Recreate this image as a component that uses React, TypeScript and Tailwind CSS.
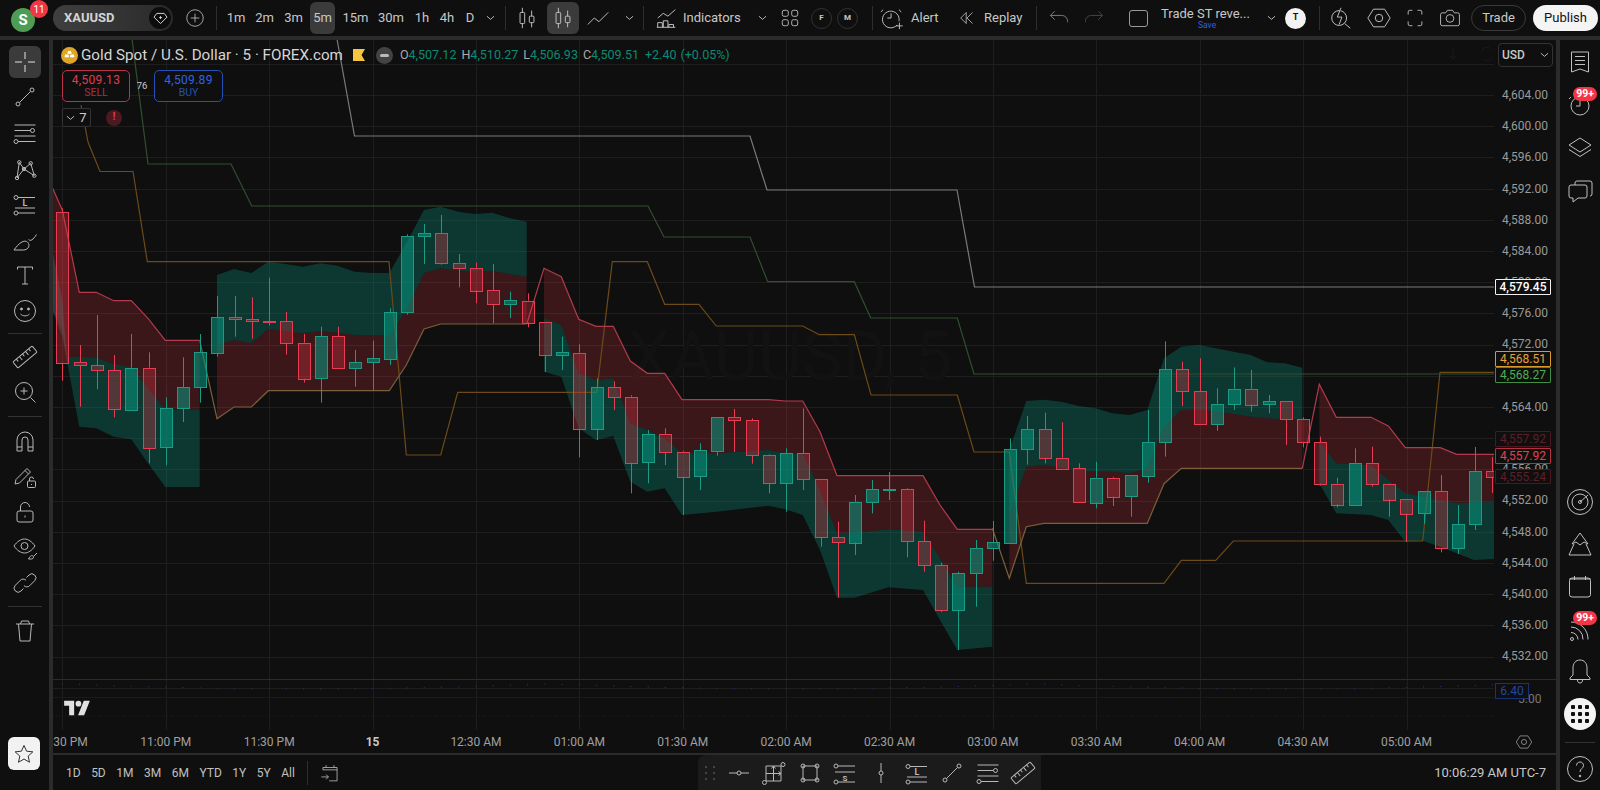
import React from 'react';

type Pt = [number, number];
type Candle = [number, number, number, number, number]; // up(1)/down(0), wick top, body top, body bottom, wick bottom

const Icon: React.FC<{ size?: number; className?: string; children: React.ReactNode }> = ({ size = 28, className, children }) => (
  <svg viewBox="0 0 28 28" width={size} height={size} fill="none" stroke="currentColor" strokeWidth={1} className={className}>
    {children}
  </svg>
);

const Dot = ({ x, y, r = 2 }: { x: number; y: number; r?: number }) => <circle cx={x} cy={y} r={r} />;

/* ---- drawing tool glyphs ---- */
const icons = {
  cross: <path d="M14 4v7M14 17v7M4 14h7M17 14h7" />,
  trend: <><path d="M8.5 19.5 19.5 8.5" /><Dot x={7} y={21} /><Dot x={21} y={7} /></>,
  fib: <><path d="M3.5 6h21M3.5 11.5h16M3.5 17h21M7 22.5h17.5" /><Dot x={21.5} y={11.5} /><Dot x={5} y={22.5} /></>,
  pattern: <><path d="M6 23 8.3 7.3 13 14l6.7-5.7 3.6 12.4L13 14 6 23" /><Dot x={6} y={23} r={1.7} /><Dot x={8.3} y={7.3} r={1.7} /><Dot x={13} y={14} r={1.7} /><Dot x={19.7} y={8.3} r={1.7} /><Dot x={23.3} y={20.7} r={1.7} /></>,
  long: <><path d="M7 7.5h17M4 18h20M7 23h17" /><Dot x={5} y={7.5} /><Dot x={5} y={23} /><text x="14" y="16" fontSize="9" fontWeight="700" textAnchor="middle" fill="currentColor" stroke="none" fontFamily="Roboto, sans-serif">L</text></>,
  short: <><path d="M7 7h17M4 13h20M7 23h17" /><Dot x={5} y={7} /><Dot x={5} y={23} /><text x="14" y="21.5" fontSize="8" fontWeight="700" textAnchor="middle" fill="currentColor" stroke="none" fontFamily="Roboto, sans-serif">S</text></>,
  brush: <><path d="M3 24h9.5c4 0 6.5-3.500 5-6.500-1-2.500-4-3-6.500-1.500-3 1.500-6 5-8 8z" /><path d="M17.500 13.500c2 2 4.500.5 8-5" /></>,
  text: <path d="M6.5 8.500V6h15v2.500M14 6v17M11 23h6" />,
  smile: <><circle cx="14" cy="14" r="10.5" /><circle cx="10.5" cy="12" r="1" fill="currentColor" /><circle cx="17.5" cy="12" r="1" fill="currentColor" /><path d="M9.5 17c2.500 2.500 6.500 2.500 9 0" /></>,
  ruler: <g transform="rotate(-40 14 14)"><rect x="1.5" y="10" width="25" height="8" rx="1" /><path d="M6 10v3M10 10v4.500M14 10v3M18 10v4.500M22 10v3" /></g>,
  zoom: <><circle cx="13" cy="13" r="8.5" /><path d="M13 9.500v7M9.500 13h7M19.500 19.500l5 5" /></>,
  magnet: <path d="M6 24V13a8 8 0 0 1 16 0v11h-5V13a3 3 0 0 0-6 0v11zM6 20h5M17 20h5" />,
  pencilLock: <><path d="M4 22l1-4.500L16 6.500l3.500 3.500L8.500 21zM14 8.500l3.500 3.500" /><rect x="16.5" y="19" width="8" height="6.5" rx="1" /><path d="M18.500 19v-2a2 2 0 0 1 4 0M20.500 22v1" /></>,
  lock: <><rect x="6" y="13" width="16" height="11" rx="2" /><path d="M9.500 13V9a4.500 4.500 0 0 1 9 0M14 17.500v2" /></>,
  eye: <><path d="M3 12c3-4.500 7-7 10.500-7S21 7.500 24 12c-3 4.500-7 7-10.500 7S6 16.500 3 12z" /><circle cx="13.5" cy="12" r="3.5" /><path d="M17.500 25h3c2 0 2.500-2 1.500-3s-2.500-.5-4.500 3zM23 22l3-3" /></>,
  link: <><path d="M12.500 19.500 10 22a4 4 0 1 1-5.700-5.700l5-5a4 4 0 0 1 5.700 0" /><path d="M15.500 8.500 18 6a4 4 0 1 1 5.700 5.700l-5 5a4 4 0 0 1-5.700 0" /></>,
  trash: <path d="M5 8h18M7.500 8l1.500 17h10l1.500-17M9.500 8l1-3h7l1 3" />,
  star: <path d="M14 4l3 6.700 7.300.8-5.400 4.900 1.500 7.200L14 19.900l-6.400 3.700 1.500-7.200L3.700 11.500l7.300-.8z" />,
  hline: <><path d="M4 14h8M16 14h8" /><Dot x={14} y={14} /></>,
  range: <><path d="M6 7h15v15H6zM6 14.500h15M13.500 7v15M13.500 7l-2 2.500M13.500 7l2 2.500M21 14.500l-2.500-2M21 14.500l-2.500 2" /><Dot x={23} y={5.5} /><Dot x={4.5} y={23.5} /></>,
  rect: <><path d="M7 7h14v14H7z" /><Dot x={7} y={7} /><Dot x={21} y={7} /><Dot x={7} y={21} /><Dot x={21} y={21} /></>,
  vline: <><path d="M14 4v8M14 16v8" /><Dot x={14} y={14} /></>,
};

const Interval = ({ label, w, active }: { label: string; w: string; active?: boolean }) => (
  <div className={`${w} h-8 flex items-center justify-center rounded-md text-[13px] ${active ? 'bg-[#3b3b3b]' : ''}`}>{label}</div>
);

const Chevron = ({ className }: { className?: string }) => (
  <svg viewBox="0 0 10 6" width="9" height="6" fill="none" stroke="currentColor" className={className}>
    <path d="M1 1l4 3.500L9 1" />
  </svg>
);

const Sep = ({ className }: { className?: string }) => <div className={`w-px h-6 bg-[#2e2e2e] ${className ?? ''}`} />;

const candleIcon = (
  <Icon size={26}><path d="M9 3v5M9 20v5M19 6v6M19 19v5" /><rect x="6.5" y="8" width="5" height="12" rx="1" /><rect x="16.5" y="12" width="5" height="7" rx="1" /></Icon>
);

const TopBar = () => (
  <div className="h-9 flex items-center bg-[#0f0f0f] text-[#c8c8c8] shrink-0">
    {/* avatar */}
    <div className="relative w-[53px] h-9 shrink-0 flex items-center pl-[11px]">
      <div className="w-6 h-6 mt-1 rounded-full bg-[#4f9d55] text-white text-[15px] font-bold flex items-center justify-center">S</div>
      <div className="absolute left-[30px] top-0 w-[18px] h-[18px] rounded-full bg-[#f23645] text-white text-[10px] flex items-center justify-center">11</div>
    </div>
    <div className="w-[120px] h-[26px] rounded-full bg-gradient-to-r from-[#3f3f3f] to-[#2a2a2a] flex items-center justify-between shrink-0 pl-[11px] pr-[2px]">
      <span className="text-[13px] font-bold text-[#d4d4d4]">XAUUSD</span>
      <span className="w-[22px] h-[22px] rounded-full bg-[#0d0d0d] flex items-center justify-center text-[#ddd]">
        <svg viewBox="0 0 16 14" width="15" height="13" fill="none" stroke="currentColor"><path d="M4 1.500h8l3 4-7 7-7-7zM6.500 6h3M8 4.500v3" /></svg>
      </span>
    </div>
    <div className="w-[43px] flex justify-center shrink-0">
      <Icon size={22}><circle cx="14" cy="14" r="10.5" /><path d="M14 8.500v11M8.500 14h11" /></Icon>
    </div>
    <Sep className="mr-[5px]" />
    <Interval label="1m" w="w-[28px]" />
    <Interval label="2m" w="w-[29px]" />
    <Interval label="3m" w="w-[29px]" />
    <div className="w-[2px]" />
    <Interval label="5m" w="w-[25px]" active />
    <Interval label="15m" w="w-[41px]" />
    <Interval label="30m" w="w-[30px]" />
    <Interval label="1h" w="w-[32px]" />
    <Interval label="4h" w="w-[18px]" />
    <Interval label="D" w="w-[28px]" />
    <div className="w-3 flex justify-center"><Chevron /></div>
    <div className="w-[9px]" />
    <Sep />
    <div className="w-[41px] flex justify-center">{candleIcon}</div>
    <div className="w-8 h-8 rounded-md bg-[#3b3b3b] flex items-center justify-center">{candleIcon}</div>
    <div className="w-[38px] flex justify-center">
      <Icon size={26}><path d="M3 21l7-7 5 4 10-10" /></Icon>
    </div>
    <div className="w-[6px]" />
    <div className="w-[13px] flex justify-center"><Chevron /></div>
    <div className="w-[7px]" />
    <Sep />
    <div className="w-[39px] flex justify-center pl-[7px]">
      <Icon size={26}><path d="M4 14l6-5 5 3 8-7M4 24v-5h5v5M10 24v-7h5v7M16 24v-3h5v3M3 24h20" /></Icon>
    </div>
    <span className="w-[72px] text-[13px]">Indicators</span>
    <div className="w-[14px] flex justify-center"><Chevron /></div>
    <div className="w-[42px] flex justify-center">
      <Icon size={24}><rect x="5" y="5" width="7" height="7" rx="2" /><rect x="16" y="5" width="7" height="7" rx="2" /><rect x="5" y="16" width="7" height="7" rx="2" /><rect x="16" y="16" width="7" height="7" rx="2" /></Icon>
    </div>
    <div className="w-[21px] h-[21px] rounded-full border border-[#333] flex items-center justify-center text-[8px] font-bold mr-[5px]">F</div>
    <div className="w-[21px] h-[21px] rounded-full border border-[#333] flex items-center justify-center text-[8px] font-bold">M</div>
    <div className="w-[14px]" />
    <Sep />
    <div className="w-[38px] flex justify-center">
      <Icon size={26}><path d="M19.500 21.500a9 9 0 1 1 2-4M13 9v5H9M4.500 5 2 7.500M21.500 5 24 7.500M22 19v7M18.500 22.500h7" /></Icon>
    </div>
    <span className="w-[39px] text-[13px]">Alert</span>
    <div className="w-[34px] flex justify-center">
      <Icon size={22}><path d="M13 7l-7 7 7 7zM21 7l-7 7 7 7" /></Icon>
    </div>
    <span className="w-[52px] text-[13px]">Replay</span>
    <Sep />
    <div className="w-[44px] flex justify-center text-[#8a8a8a]">
      <Icon size={24}><path d="M4 11h13c4 0 7 3 7 7v1M4 11l5-5M4 11l5 5" /></Icon>
    </div>
    <div className="w-[26px] flex justify-center text-[#4d4d4d]">
      <Icon size={24}><path d="M24 11H11c-4 0-7 3-7 7v1M24 11l-5-5M24 11l-5 5" /></Icon>
    </div>
    <div className="w-[22px]" />
    <div className="w-[19px] h-[17px] rounded-[3px] border border-[#999]" />
    <div className="w-[13px]" />
    <div className="w-[104px] flex flex-col items-start leading-none">
      <span className="text-[13px] whitespace-nowrap">Trade ST reve...</span>
      <span className="text-[8.5px] text-[#2f5fe0] ml-[37px] mt-[1px]">Save</span>
    </div>
    <div className="w-[13px] flex justify-center"><Chevron /></div>
    <div className="w-[7px]" />
    <div className="w-[21px] h-[21px] rounded-full bg-[#f2f2f2] text-[#111] text-[9px] font-bold flex items-center justify-center">T</div>
    <div className="w-[13px]" />
    <Sep />
    <div className="w-[41px] flex justify-center">
      <Icon size={26}><circle cx="12" cy="14" r="8" /><path d="M18 20l6 5M14 3l-4 10h5l-3 8" fill="#0f0f0f" /></Icon>
    </div>
    <div className="w-[36px] flex justify-center">
      <Icon size={26}><path d="M8 4.500h12l6 9.500-6 9.500H8L2 14z" /><circle cx="14" cy="14" r="4" /></Icon>
    </div>
    <div className="w-[35px] flex justify-center">
      <Icon size={24}><path d="M6 10V7a2 2 0 0 1 2-2h3M17 5h3a2 2 0 0 1 2 2v3M22 18v3a2 2 0 0 1-2 2h-3M11 23H8a2 2 0 0 1-2-2v-3" /></Icon>
    </div>
    <div className="w-[35px] flex justify-center">
      <Icon size={24}><path d="M3 10a2 2 0 0 1 2-2h4l2-3h6l2 3h4a2 2 0 0 1 2 2v11a2 2 0 0 1-2 2H5a2 2 0 0 1-2-2z" /><circle cx="14" cy="14.5" r="4.5" /></Icon>
    </div>
    <div className="w-[4px]" />
    <div className="w-[55px] h-[26px] rounded-full border border-[#3a3a3a] flex items-center justify-center text-[13px]">Trade</div>
    <div className="w-[7px]" />
    <div className="w-[65px] h-[26px] rounded-full bg-[#f4f4f4] text-[#111] flex items-center justify-center text-[13px]">Publish</div>
  </div>
);

const ToolBtn = ({ d, active }: { d: React.ReactNode; active?: boolean }) => (
  <div className="h-[35.6px] flex items-center justify-center">
    <div className={`w-8 h-8 rounded-md flex items-center justify-center ${active ? 'bg-[#3b3b3b] text-[#e4e4e4]' : ''}`}>
      <Icon>{d}</Icon>
    </div>
  </div>
);

const ToolSep = ({ h }: { h: string }) => (
  <div className={`${h} flex items-center justify-center`}><div className="w-[34px] h-px bg-[#333]" /></div>
);

const LeftBar = () => (
  <div className="w-[49px] bg-[#0f0f0f] flex flex-col shrink-0 text-[#b8b8b8] pt-1">
    <ToolBtn d={icons.cross} active />
    <ToolBtn d={icons.trend} />
    <ToolBtn d={icons.fib} />
    <ToolBtn d={icons.pattern} />
    <ToolBtn d={icons.long} />
    <ToolBtn d={icons.brush} />
    <ToolBtn d={icons.text} />
    <ToolBtn d={icons.smile} />
    <ToolSep h="h-[10px]" />
    <ToolBtn d={icons.ruler} />
    <ToolBtn d={icons.zoom} />
    <ToolSep h="h-[13px]" />
    <ToolBtn d={icons.magnet} />
    <ToolBtn d={icons.pencilLock} />
    <ToolBtn d={icons.lock} />
    <ToolBtn d={icons.eye} />
    <ToolBtn d={icons.link} />
    <ToolSep h="h-[11px]" />
    <ToolBtn d={icons.trash} />
    <div className="mt-auto mb-5 mx-2 h-[33px] w-8 rounded-md bg-[#f2f2f2] text-[#111] flex items-center justify-center">
      <Icon size={24}>{icons.star}</Icon>
    </div>
  </div>
);

const RightBtn = ({ h, children, badge }: { h: string; children: React.ReactNode; badge?: boolean }) => (
  <div className={`relative ${h} flex items-center justify-center`}>
    {children}
    {badge && <span className="absolute right-[3px] top-[4px] h-[14px] px-[3px] rounded-full bg-[#f23645] text-white text-[10.5px] font-bold leading-[14px]">99+</span>}
  </div>
);

const RightBar = () => (
  <div className="w-10 bg-[#0f0f0f] flex flex-col items-stretch shrink-0 text-[#c0c0c0]">
    <RightBtn h="h-[43px]"><Icon><path d="M5.500 4h17v20l-8.500-3-8.500 3zM9 8.500h10M9 12.500h10M9 16.500h10" /></Icon></RightBtn>
    <RightBtn h="h-[43px]" badge><Icon><circle cx="14" cy="15" r="9" /><path d="M14 9v6h-4M5 6 3 8M23 6l2 2" /></Icon></RightBtn>
    <RightBtn h="h-[43px]"><Icon><path d="M14 4 25 11 14 18 3 11zM3 15.500l11 7 11-7" /></Icon></RightBtn>
    <RightBtn h="h-[43px]"><Icon><path d="M9 8V6a2 2 0 0 1 2-2h13a2 2 0 0 1 2 2v11a2 2 0 0 1-2 2M3 10a2 2 0 0 1 2-2h14a2 2 0 0 1 2 2v9a2 2 0 0 1-2 2h-7l-5 4v-4H5a2 2 0 0 1-2-2z" /></Icon></RightBtn>
    <div className="mt-auto" />
    <RightBtn h="h-[42px]"><Icon><circle cx="14" cy="14" r="12.5" /><circle cx="14" cy="14" r="8" /><circle cx="14" cy="14" r="1.5" /><path d="M14 14l8-7" /></Icon></RightBtn>
    <RightBtn h="h-[42px]"><Icon><path d="M14 3l8 11-4-2-4 3-4-3-4 2zM8 14L3 25h22l-5-11" /></Icon></RightBtn>
    <RightBtn h="h-[42px]"><Icon><rect x="3.5" y="6" width="21" height="19" rx="2.5" /><path d="M8.500 4v4M19.500 4v4M3.500 7h21" /></Icon></RightBtn>
    <RightBtn h="h-[44px]" badge><Icon><circle cx="6" cy="24" r="1.5" /><path d="M5 17.500a7 7 0 0 1 7 7M5 12a12 12 0 0 1 12 12.500M5 7a17 17 0 0 1 17 17.500" /></Icon></RightBtn>
    <RightBtn h="h-[40px]"><Icon><path d="M14 3c-4.500 0-7 3.500-7 8v7l-3 3v1.500h20V21l-3-3v-7c0-4.500-2.500-8-7-8zM11.500 23c0 2 1 3 2.500 3s2.500-1 2.500-3" /></Icon></RightBtn>
    <RightBtn h="h-[46px]">
      <div className="w-8 h-8 rounded-full bg-[#f4f4f4] grid grid-cols-3 gap-[2px] p-[7px] place-items-center">
        {Array.from({ length: 9 }).map((_, i) => <span key={i} className="w-[4px] h-[4px] rounded-[1px] bg-[#111]" />)}
      </div>
    </RightBtn>
    <div className="h-[10px] flex items-center justify-center"><div className="w-[30px] h-px bg-[#333]" /></div>
    <RightBtn h="h-[43px]"><Icon><circle cx="14" cy="14" r="12.5" /><path d="M10.500 10.500c0-2 1.500-3.500 3.500-3.500s3.500 1.500 3.500 3.500c0 3-3.500 3-3.500 6.500" /><circle cx="14" cy="21" r=".8" fill="currentColor" /></Icon></RightBtn>
  </div>
);

/* ---- chart data, read off in crop coordinates (1/3 px) ---- */
const crop = (ox: number, oy: number) => (pts: number[][]): Pt[] => pts.map(([x, y]) => [ox + x / 3, oy + y / 3]);
const a = crop(50, 180);
const b = crop(520, 250);
const c = crop(980, 330);

const candlesA = [
  [0, 85, 97, 549, 602], [0, 495, 547, 556, 680], [0, 405, 556, 571, 628], [0, 525, 571, 688, 712], [1, 462, 563, 688, 688],
  [0, 517, 563, 803, 850], [1, 652, 685, 803, 856], [1, 532, 621, 685, 726], [1, 462, 517, 622, 668], [1, 348, 412, 519, 530],
  [0, 348, 412, 419, 470], [0, 352, 418, 425, 476], [0, 293, 423, 425, 436], [0, 396, 424, 489, 524], [0, 462, 488, 596, 608],
  [1, 440, 469, 596, 668], [0, 440, 469, 564, 564], [1, 510, 546, 564, 620], [1, 482, 535, 547, 632], [1, 385, 396, 536, 555],
  [1, 163, 169, 397, 404], [1, 132, 160, 170, 252], [0, 105, 160, 249, 254], [0, 222, 248, 264, 322], [0, 248, 263, 331, 370],
  [0, 252, 331, 373, 430], [1, 335, 361, 374, 414], [0, 340, 362, 427, 442],
].map(([k, ...v]) => [k, ...v.map((y) => 180 + y / 3)]);

const candlesB = [
  [0, 216, 216, 316, 366], [1, 260, 307, 317, 360], [0, 283, 308, 536, 622], [1, 385, 411, 536, 570], [0, 394, 411, 442, 480],
  [0, 435, 440, 638, 730], [1, 540, 553, 638, 700], [0, 535, 553, 607, 645], [0, 602, 605, 680, 795], [1, 580, 601, 680, 720],
  [1, 502, 502, 603, 617], [0, 477, 502, 512, 606], [0, 505, 511, 616, 641], [0, 613, 616, 699, 730], [1, 595, 610, 699, 785],
  [0, 475, 610, 688, 720], [0, 688, 688, 862, 890], [0, 815, 861, 877, 1043], [1, 735, 755, 877, 915], [1, 690, 718, 758, 790],
  [1, 666, 717, 719, 750], [0, 715, 718, 875, 922], [0, 812, 873, 946, 965], [0, 938, 946, 1082, 1086], [1, 965, 970, 1081, 1200],
  [1, 870, 895, 971, 1070], [1, 813, 877, 896, 932],
].map(([k, ...v]) => [k, ...v.map((y) => 250 + y / 3)]);

const candlesC = [
  [1, 326, 358, 639, 640], [1, 258, 298, 358, 404], [0, 248, 298, 384, 400], [0, 277, 383, 416, 416], [0, 400, 415, 517, 517],
  [1, 395, 443, 517, 535], [0, 440, 443, 500, 528], [1, 435, 436, 500, 560], [1, 240, 336, 437, 458], [1, 34, 118, 337, 380],
  [0, 95, 118, 185, 228], [0, 85, 183, 281, 281], [1, 175, 221, 281, 302], [1, 112, 176, 221, 240], [0, 120, 176, 223, 245],
  [1, 195, 214, 224, 250], [0, 213, 214, 268, 345], [0, 262, 268, 336, 352], [0, 320, 336, 461, 467], [0, 443, 461, 523, 532],
  [1, 355, 398, 524, 528], [0, 350, 398, 461, 470], [0, 460, 461, 508, 560], [0, 507, 507, 551, 636], [1, 484, 484, 551, 582],
  [0, 435, 484, 655, 667], [1, 525, 583, 656, 672], [1, 351, 423, 582, 600], [0, 381, 423, 440, 489],
].map(([k, ...v]) => [k, ...v.map((y) => 330 + y / 3)]);

const candles = [...candlesA, ...candlesB, ...candlesC] as Candle[];

const RED = 'rgba(242,54,69,0.2)';
const GREEN = 'rgba(8,153,129,0.3)';

const midA = a([[501, 495], [552, 480], [604, 490], [655, 447], [706, 453], [760, 460], [811, 453], [862, 458], [914, 465], [967, 465], [1018, 468], [1069, 390], [1122, 280], [1172, 265], [1225, 272], [1275, 275], [1327, 272], [1380, 283], [1430, 290]]);
const midB = b([[72, 205], [124, 225], [176, 370], [228, 390], [280, 385], [331, 520], [382, 540], [434, 565], [486, 610], [590, 610], [745, 600], [796, 610], [848, 610], [900, 720], [951, 850], [1003, 848], [1106, 838], [1209, 845], [1260, 925], [1312, 1010], [1417, 1010]]);
const midC = c([[88, 560], [139, 410], [191, 405], [244, 413], [295, 420], [346, 425], [397, 425], [449, 430], [502, 415], [552, 290], [604, 240], [657, 240], [707, 245], [760, 252], [812, 260], [862, 265], [914, 268], [967, 270]]);
const midD = c([[1018, 335], [1069, 400], [1173, 405], [1225, 450], [1276, 490], [1381, 510], [1430, 520], [1542, 515]]);

const redTopA = a([[8, 25], [37, 90], [88, 337], [139, 337], [191, 362], [244, 362], [294, 415], [346, 481], [449, 481]]);
const redTopB = b([[72, 55], [124, 80], [176, 208], [228, 229], [280, 229], [331, 333], [382, 370], [434, 370], [486, 449], [745, 449], [796, 453], [848, 453], [900, 545], [951, 677], [1209, 677], [1260, 765], [1312, 838], [1417, 838]]);
const redTopC = c([[1018, 163], [1069, 262], [1173, 262], [1225, 288], [1276, 353], [1381, 353], [1430, 373], [1542, 373]]);

const bands: { top: Pt[]; bottom: Pt[]; fill: string }[] = [
  {
    fill: RED,
    top: redTopA,
    bottom: a([[8, 390], [37, 450], [50, 530], [88, 530], [139, 533], [191, 553], [244, 562], [294, 625], [346, 690], [449, 690]]),
  },
  {
    fill: GREEN,
    top: a([[8, 215], [37, 360], [50, 530], [88, 530], [139, 533], [191, 553], [244, 562], [294, 625], [346, 690], [449, 690]]),
    bottom: a([[8, 395], [37, 470], [88, 740], [139, 745], [191, 770], [244, 778], [294, 850], [346, 921], [449, 921]]),
  },
  {
    fill: GREEN,
    top: a([[501, 285], [552, 267], [604, 279], [655, 245], [706, 252], [760, 260], [811, 250], [862, 257], [914, 275], [967, 279], [1018, 279], [1069, 190], [1122, 90], [1172, 80], [1225, 95], [1275, 102], [1327, 98], [1380, 115], [1430, 125]]),
    bottom: midA,
  },
  {
    fill: RED,
    top: midA,
    bottom: a([[501, 716], [552, 681], [604, 681], [655, 632], [1018, 632], [1069, 555], [1122, 447], [1172, 432], [1430, 432]]),
  },
  { fill: RED, top: redTopB, bottom: midB },
  {
    fill: GREEN,
    top: midB,
    bottom: b([[72, 365], [124, 380], [176, 535], [228, 570], [280, 558], [331, 695], [382, 725], [434, 715], [486, 795], [590, 785], [745, 767], [796, 778], [848, 795], [900, 900], [951, 1043], [1003, 1043], [1106, 1012], [1209, 1020], [1260, 1110], [1312, 1200], [1417, 1190]]),
  },
  {
    fill: GREEN,
    top: c([[88, 360], [139, 213], [191, 209], [244, 215], [295, 228], [346, 235], [397, 250], [449, 255], [502, 240], [552, 85], [604, 50], [657, 45], [707, 55], [760, 65], [812, 75], [862, 97], [914, 100], [967, 113]]),
    bottom: midC,
  },
  {
    fill: RED,
    top: midC,
    bottom: c([[88, 745], [139, 590], [191, 580], [502, 580], [552, 461], [604, 415], [967, 415]]),
  },
  { fill: RED, top: redTopC, bottom: midD },
  {
    fill: GREEN,
    top: midD,
    bottom: c([[1018, 460], [1069, 550], [1173, 555], [1225, 570], [1276, 635], [1328, 632], [1381, 650], [1430, 670], [1482, 690], [1542, 687]]),
  },
];

const toPts = (pts: Pt[]) => pts.map(([x, y]) => `${x.toFixed(1)},${y.toFixed(1)}`).join(' ');

const tanLine: Pt[] = a([[449, 481], [501, 716], [552, 681], [604, 681], [655, 632], [1018, 632], [1069, 555], [1122, 447], [1172, 432], [1430, 432]]);
const tanLine2: Pt[] = c([[37, 595], [88, 745], [139, 590], [191, 580], [502, 580], [552, 461], [604, 415], [967, 415]]);
const redLine2: Pt[] = [...a([[1430, 432]]), ...redTopB];
const redLine3: Pt[] = [...c([[967, 415]]), ...redTopC];

const orange: Pt[] = [[81, 105], [88, 142], [100, 171.5], [133, 171.5], [147.3, 261.7], [389, 261.7], [406.3, 455], [440.7, 455], [457.7, 392.3], [596.7, 392.3], [612.3, 261.7], [647.3, 261.7], [664.7, 304.3], [699, 304.3], [716.3, 326], [802.7, 326], [819.3, 334.7], [854.3, 334.7], [871, 395], [957.3, 395], [974, 452], [1009.3, 452], [1026.3, 583.3], [1164, 583.3], [1181.3, 560.3], [1215.7, 560.3], [1233.3, 541], [1422.7, 541], [1440, 372.3], [1494, 372.3]];
const darkGreen: Pt[] = [[132, 39], [148, 164], [231, 164], [251.7, 206], [648, 206], [664, 237], [750, 237], [767.7, 281.7], [854.3, 281.7], [870.7, 318], [957.3, 318], [974, 374], [1494, 374]];
const gray: Pt[] = [[337, 39], [354.5, 136], [750, 136], [767, 190], [957, 190], [974.5, 287], [1494, 287]];

const ChartSvg = () => {
  const hLines = Array.from({ length: 21 }, (_, i) => 95 + 31.2 * (i - 1));
  const vLines = Array.from({ length: 14 }, (_, i) => Math.round(62.4 + 103.4 * i) + 0.5);
  return (
    <svg viewBox="53 40 1441 690" width="1441" height="690" className="block">
      {hLines.map((y) => <line key={y} x1="53" x2="1494" y1={Math.round(y) + 0.5} y2={Math.round(y) + 0.5} stroke="#1e1e1e" />)}
      {vLines.map((x) => <line key={x} x1={x} x2={x} y1="40" y2="730" stroke="#1e1e1e" />)}
      <line x1="53" x2="1494" y1="697.5" y2="697.5" stroke="#1a1a1a" />
      <line x1="53" x2="1494" y1="716" y2="716" stroke="#1c2238" strokeDasharray="1 2" />
      <text x="790" y="380" fontSize="68" textAnchor="middle" fill="#121212" fontFamily="Roboto, sans-serif">XAUUSD, 5</text>

      {bands.map((s, i) => <polygon key={i} points={toPts([...s.top, ...[...s.bottom].reverse()])} fill={s.fill} />)}

      <polyline points={toPts(orange)} fill="none" stroke="#6d4a18" strokeWidth="1.2" />
      <polyline points={toPts(darkGreen)} fill="none" stroke="#31502f" strokeWidth="1.2" />
      <polyline points={toPts(gray)} fill="none" stroke="#7a7a7a" strokeWidth="1.2" />
      <polyline points={toPts(tanLine)} fill="none" stroke="#7a5f3a" strokeWidth="1.2" />
      <polyline points={toPts(tanLine2)} fill="none" stroke="#7a5f3a" strokeWidth="1.2" />
      <polyline points={toPts(redTopA)} fill="none" stroke="#b23a4c" strokeWidth="1.2" />
      <polyline points={toPts(redLine2)} fill="none" stroke="#b23a4c" strokeWidth="1.2" />
      <polyline points={toPts(redLine3)} fill="none" stroke="#b23a4c" strokeWidth="1.2" />

      {candles.map(([up, wt, bt, bb, wb], i) => {
        const x = Math.round(62.4 + 17.23 * i) + 0.5;
        const stroke = up ? '#1a9c84' : '#e83c52';
        const fill = up ? 'rgba(8,153,129,0.55)' : 'rgba(242,54,69,0.3)';
        return (
          <g key={i} stroke={stroke}>
            <line x1={x} x2={x} y1={wt} y2={bt} />
            <line x1={x} x2={x} y1={bb} y2={wb} />
            <rect x={x - 6} y={Math.round(bt) + 0.5} width="12" height={Math.max(Math.round(bb - bt), 1)} fill={fill} />
          </g>
        );
      })}

      {Array.from({ length: 84 }, (_, i) => {
        const y = 684 + 5 * Math.abs(Math.sin(i / 9));
        return <circle key={i} cx={62.4 + 17.23 * i} cy={y} r="0.7" fill="#1f2f66" />;
      })}
    </svg>
  );
};

const PriceTag = ({ top, text, cls, bold }: { top: string; text: string; cls: string; bold?: boolean }) => (
  <div className={`absolute left-[1px] w-[56px] flex items-center justify-center border rounded-[1px] bg-[#0f0f0f] text-[12px] leading-none ${top} ${cls} ${bold ? 'font-medium' : ''}`}>{text}</div>
);

const priceLabels = ['4,604.00', '4,600.00', '4,596.00', '4,592.00', '4,588.00', '4,584.00', '4,580.00', '4,576.00', '4,572.00', '4,568.00', '4,564.00', '4,560.00', '4,556.00', '4,552.00', '4,548.00', '4,544.00', '4,540.00', '4,536.00', '4,532.00'];
const timeLabels = ['10:30 PM', '11:00 PM', '11:30 PM', '15', '12:30 AM', '01:00 AM', '01:30 AM', '02:00 AM', '02:30 AM', '03:00 AM', '03:30 AM', '04:00 AM', '04:30 AM', '05:00 AM'];
const ranges = ['1D', '5D', '1M', '3M', '6M', 'YTD', '1Y', '5Y', 'All'];

const PriceAxis = () => (
  <div className="relative w-[62px] h-[690px] overflow-hidden text-[#9a9a9a]">
    <div className="flex flex-col pt-[39.4px]">
      {priceLabels.map((p) => (
        <div key={p} className="h-[31.2px] flex items-center justify-start pl-[8px] text-[12px]">{p}</div>
      ))}
    </div>
    <div className="absolute left-0 top-[650px] w-[62px] pl-[24px] text-[12px] text-[#777]">5.00</div>
    <PriceTag top="top-[239px] h-[16px]" text="4,579.45" cls="border-[#f0f0f0] text-white" bold />
    <PriceTag top="top-[311px] h-[16px]" text="4,568.51" cls="border-[#d99a2b] text-[#e8a33a]" />
    <PriceTag top="top-[327px] h-[16px]" text="4,568.27" cls="border-[#3f8f45] text-[#4caf50]" />
    <PriceTag top="top-[391px] h-[16px]" text="4,557.92" cls="border-[#4a1820] text-[#5e1f2a]" />
    <PriceTag top="top-[408px] h-[16px]" text="4,557.92" cls="border-[#b5303f] text-[#e5404f]" />
    <PriceTag top="top-[429px] h-[15px]" text="4,555.24" cls="border-[#4a1820] text-[#5e1f2a]" />
    <div className="absolute left-[1px] top-[643px] w-[34px] h-4 flex items-center justify-center border border-[#1b3272] bg-[#0f0f0f] text-[#2546a0] text-[12px]">6.40</div>
  </div>
);

const Legend = () => (
  <div className="absolute left-[8px] top-[4px] flex items-center h-[22px] whitespace-nowrap">
    <div className="w-[17px] h-[17px] rounded-full bg-[#e0a526] flex items-center justify-center">
      <svg viewBox="0 0 12 10" width="11" height="9" fill="#fff"><path d="M4.500 0h3l1 3h-5zM1 4h4l.5 3H.5zM7 4h4l.5 3h-5z" /></svg>
    </div>
    <span className="ml-[3px] text-[15.2px] text-[#d6d6d6]">Gold Spot / U.S. Dollar · 5 · FOREX.com</span>
    <svg viewBox="0 0 12 12" width="12" height="12" className="ml-[10px]"><path d="M0 0h12L8.500 6 12 12H0z" fill="#f5c542" /></svg>
    <div className="ml-[11px] w-[17px] h-[17px] rounded-full bg-[#434343] flex items-center justify-center">
      <div className="w-[9px] h-[3px] rounded bg-[#bbb]" />
    </div>
    <div className="ml-[7px] flex text-[12.5px] text-[#0d8a73]">
      <span className="text-[#aaa]">O</span><span>4,507.12</span>
      <span className="text-[#aaa] ml-[5px]">H</span><span>4,510.27</span>
      <span className="text-[#aaa] ml-[5px]">L</span><span>4,506.93</span>
      <span className="text-[#aaa] ml-[5px]">C</span><span>4,509.51</span>
      <span className="ml-[6px]">+2.40</span>
      <span className="ml-[4px]">(+0.05%)</span>
    </div>
  </div>
);

const TradeButtons = () => (
  <div className="absolute left-[9px] top-[30px]">
    <div className="flex items-center">
      <div className="w-[68px] h-8 rounded-[5px] border border-[#b8324a] bg-[#0f0f0f] flex flex-col items-center justify-center leading-none">
        <span className="text-[#e23b50] text-[12px] tracking-[0.3px]">4,509.13</span>
        <span className="text-[#a83242] text-[10.5px] mt-[2px]">SELL</span>
      </div>
      <span className="w-[24px] text-center text-[9.5px] text-[#ccc]">76</span>
      <div className="w-[69px] h-8 rounded-[5px] border border-[#2650b8] bg-[#0f0f0f] flex flex-col items-center justify-center leading-none">
        <span className="text-[#2f62e8] text-[12px] tracking-[0.3px]">4,509.89</span>
        <span className="text-[#2950a8] text-[10.5px] mt-[2px]">BUY</span>
      </div>
    </div>
    <div className="flex items-center mt-[6px]">
      <div className="w-[29px] h-[19px] rounded-[2px] border border-[#333] bg-[#0f0f0f] flex items-center justify-center text-[13px] text-[#ccc] gap-[4px]">
        <Chevron />7
      </div>
      <div className="ml-[15px] w-4 h-4 rounded-full bg-[#4a1a20] text-[#e0384e] text-[11px] font-bold flex items-center justify-center">!</div>
    </div>
  </div>
);

const Chart = () => (
  <div className="h-[713px] bg-[#0f0f0f] relative overflow-hidden shrink-0">
    <div className="flex">
      <div className="relative w-[1441px] h-[690px] overflow-hidden">
        <ChartSvg />
        <Legend />
        <TradeButtons />
        <div className="absolute left-[1390px] top-[4px] flex gap-[14px] text-[#1f1f1f]">
          <Icon size={20}><path d="M14 6v15M9 16l5 5 5-5" /></Icon>
          <Icon size={20}><path d="M7 10a7 7 0 0 1 13-2M21 18a7 7 0 0 1-13 2" /></Icon>
        </div>
      </div>
      <PriceAxis />
    </div>
    {/* USD selector */}
    <div className="absolute left-[1445px] top-[3px] w-[55px] h-6 rounded-[4px] border border-[#333] bg-[#0f0f0f] flex items-center justify-between px-[3px] text-[12px] font-medium text-[#c8c8c8]">
      USD<Chevron />
    </div>
    {/* pane separator */}
    <div className="absolute left-0 top-[639px] w-[1503px] h-px bg-[#2c2c2c]" />
    {/* logo */}
    <svg viewBox="0 0 36 28" width="30" height="20" className="absolute left-[9px] top-[658px]" fill="#e0e0e0">
      <path d="M14 24H7V11H0V4h14v20zM28 24h-8.500L27.500 4H36L28 24z" /><circle cx="20" cy="8" r="4" />
    </svg>
    <div className="flex h-[23px]">
      <div className="w-[1441px] overflow-hidden">
        <div className="flex -ml-[42.3px] h-[23px] items-center">
          {timeLabels.map((t) => (
            <div key={t} className={`w-[103.4px] shrink-0 text-center text-[12px] ${t === '15' ? 'font-bold text-[#c8c8c8]' : 'text-[#a0a0a0]'}`}>{t}</div>
          ))}
        </div>
      </div>
      <div className="w-[62px] flex justify-start pl-[21px] items-center text-[#bbb]">
        <Icon size={18}><path d="M8 4.500h12l6 9.500-6 9.500H8L2 14z" /><circle cx="14" cy="14" r="4" /></Icon>
      </div>
    </div>
  </div>
);

const BottomBar = () => (
  <div className="h-[35px] mt-[2px] bg-[#0f0f0f] flex shrink-0">
    <div className="w-[645px] flex items-center pl-[13px] text-[12px] text-[#c0c0c0] gap-[10.5px]">
      {ranges.map((r) => <span key={r}>{r}</span>)}
      <div className="w-px h-6 bg-[#2e2e2e] ml-[2px]" />
      <Icon size={22}><path d="M5 10V7h18v17H13M5 10h18M9 4v3M19 4v3M3 19h9M9 16l3 3-3 3" /></Icon>
    </div>
    <div className="w-[343px] h-[35px] bg-[#1b1b1b] rounded-tl-lg flex items-center text-[#b8b8b8]">
      <div className="w-[23px] grid grid-cols-2 gap-x-[5px] gap-y-[4px] justify-center pl-[7px] pr-[4px]">
        {Array.from({ length: 6 }).map((_, i) => <span key={i} className="w-[2px] h-[2px] bg-[#444]" />)}
      </div>
      {[icons.hline, icons.range, icons.rect, icons.short, icons.vline, icons.long, icons.trend, icons.fib, icons.ruler].map((d, i) => (
        <div key={i} className="w-[35.6px] flex justify-center"><Icon>{d}</Icon></div>
      ))}
    </div>
    <div className="flex-1 flex items-center justify-end pr-[10px] text-[13px] text-[#c8c8c8]">10:06:29 AM UTC-7</div>
  </div>
);

export default function App() {
  return (
    <div className="w-[1600px] h-[790px] bg-[#2b2b2b] flex flex-col overflow-hidden font-['Roboto',sans-serif]">
      <TopBar />
      <div className="flex flex-1 mt-1 gap-1 min-h-0">
        <LeftBar />
        <div className="w-[1503px] flex flex-col">
          <Chart />
          <BottomBar />
        </div>
        <RightBar />
      </div>
    </div>
  );
}
